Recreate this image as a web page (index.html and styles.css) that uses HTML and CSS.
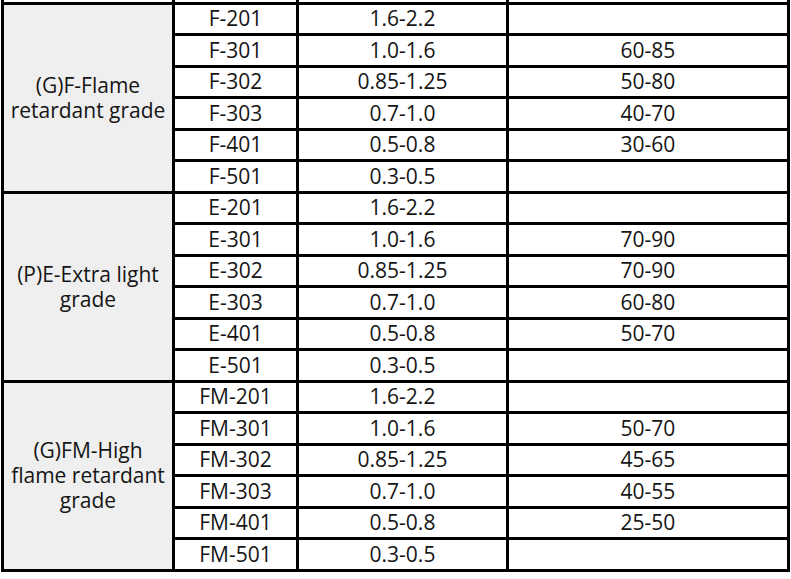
FILE: index.html
```html
<!DOCTYPE html>
<html lang="en">
<head>
<meta charset="utf-8">
<title>Grades</title>
<link rel="stylesheet" href="styles.css">
</head>
<body>
<div class="frame">
<table class="grades">
  <colgroup>
    <col class="c-grade">
    <col class="c-model">
    <col class="c-density">
    <col class="c-value">
  </colgroup>
  <tbody>
    <tr class="prev"><td class="plain"></td><td></td><td></td><td>70-90</td></tr>
    <tr><td class="label" rowspan="6">(G)F-Flame<br>retardant grade</td><td>F-201</td><td>1.6-2.2</td><td></td></tr>
    <tr><td>F-301</td><td>1.0-1.6</td><td>60-85</td></tr>
    <tr><td>F-302</td><td>0.85-1.25</td><td>50-80</td></tr>
    <tr><td>F-303</td><td>0.7-1.0</td><td>40-70</td></tr>
    <tr><td>F-401</td><td>0.5-0.8</td><td>30-60</td></tr>
    <tr><td>F-501</td><td>0.3-0.5</td><td></td></tr>
    <tr><td class="label" rowspan="6">(P)E-Extra light<br>grade</td><td>E-201</td><td>1.6-2.2</td><td></td></tr>
    <tr><td>E-301</td><td>1.0-1.6</td><td>70-90</td></tr>
    <tr><td>E-302</td><td>0.85-1.25</td><td>70-90</td></tr>
    <tr><td>E-303</td><td>0.7-1.0</td><td>60-80</td></tr>
    <tr><td>E-401</td><td>0.5-0.8</td><td>50-70</td></tr>
    <tr><td>E-501</td><td>0.3-0.5</td><td></td></tr>
    <tr><td class="label" rowspan="6">(G)FM-High<br>flame retardant<br>grade</td><td>FM-201</td><td>1.6-2.2</td><td></td></tr>
    <tr><td>FM-301</td><td>1.0-1.6</td><td>50-70</td></tr>
    <tr><td>FM-302</td><td>0.85-1.25</td><td>45-65</td></tr>
    <tr><td>FM-303</td><td>0.7-1.0</td><td>40-55</td></tr>
    <tr><td>FM-401</td><td>0.5-0.8</td><td>25-50</td></tr>
    <tr><td>FM-501</td><td>0.3-0.5</td><td></td></tr>
  </tbody>
</table>
</div>
</body>
</html>
```
FILE: styles.css
```css
html, body {
  margin: 0;
  padding: 0;
  background: #ffffff;
}

.frame {
  width: 791px;
  height: 579px;
  overflow: hidden;
}

.grades {
  margin-top: -27px;
  margin-left: 1px;
  border-collapse: collapse;
  table-layout: fixed;
  width: 786px;
  font-family: "Open Sans", "Noto Sans", sans-serif;
  font-size: 21px;
  color: #151515;
}

.c-grade { width: 171px; }
.c-model { width: 124px; }
.c-density { width: 210px; }
.c-value { width: 281px; }

.grades td {
  border: 3px solid #000;
  height: 28.5px;
  padding: 0;
  text-align: center;
  vertical-align: middle;
  line-height: 25px;
  background: #fff;
  white-space: nowrap;
}

.grades tr.prev td {
  border-top: none;
}

.grades td.label {
  background: #efefef;
}
```
